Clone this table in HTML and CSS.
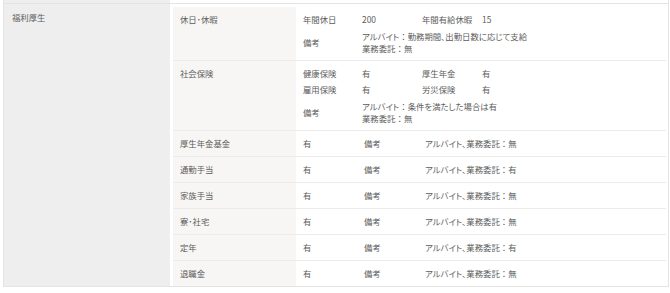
FILE: index.html
```html
<!DOCTYPE html>
<html lang="ja">
<head>
<meta charset="utf-8">
<link rel="stylesheet" href="styles.css">
</head>
<body>
<div class="table">
  <div class="row prev">
    <div class="th"></div>
    <div class="td"></div>
  </div>
  <div class="row">
    <div class="th">福利厚生</div>
    <div class="td">
      <div class="sub">
        <div class="sub-row">
          <div class="sub-label">休日･休暇</div>
          <div class="sub-val stack">
            <div class="kv4"><span>年間休日</span><span>200</span><span>年間有給休暇</span><span>15</span></div>
            <div class="note"><span>備考</span><span>アルバイト<span class="colon">：</span>勤務期間、出勤日数に応じて支給<br>業務委託<span class="colon">：</span>無</span></div>
          </div>
        </div>
        <div class="sub-row">
          <div class="sub-label">社会保険</div>
          <div class="sub-val stack">
            <div class="kv4"><span>健康保険</span><span>有</span><span>厚生年金</span><span>有</span></div>
            <div class="kv4"><span>雇用保険</span><span>有</span><span>労災保険</span><span>有</span></div>
            <div class="note"><span>備考</span><span>アルバイト<span class="colon">：</span>条件を満たした場合は有<br>業務委託<span class="colon">：</span>無</span></div>
          </div>
        </div>
        <div class="sub-row">
          <div class="sub-label">厚生年金基金</div>
          <div class="sub-val kv3"><span>有</span><span>備考</span><span>アルバイト、業務委託<span class="colon">：</span>無</span></div>
        </div>
        <div class="sub-row">
          <div class="sub-label">通勤手当</div>
          <div class="sub-val kv3"><span>有</span><span>備考</span><span>アルバイト、業務委託<span class="colon">：</span>有</span></div>
        </div>
        <div class="sub-row">
          <div class="sub-label">家族手当</div>
          <div class="sub-val kv3"><span>有</span><span>備考</span><span>アルバイト、業務委託<span class="colon">：</span>無</span></div>
        </div>
        <div class="sub-row">
          <div class="sub-label">寮･社宅</div>
          <div class="sub-val kv3"><span>有</span><span>備考</span><span>アルバイト、業務委託<span class="colon">：</span>無</span></div>
        </div>
        <div class="sub-row">
          <div class="sub-label">定年</div>
          <div class="sub-val kv3"><span>有</span><span>備考</span><span>アルバイト、業務委託<span class="colon">：</span>有</span></div>
        </div>
        <div class="sub-row">
          <div class="sub-label">退職金</div>
          <div class="sub-val kv3"><span>有</span><span>備考</span><span>アルバイト、業務委託<span class="colon">：</span>無</span></div>
        </div>
      </div>
    </div>
  </div>
</div>
</body>
</html>
```
FILE: styles.css
```css
html, body {
  margin: 0;
  padding: 0;
  background: #ffffff;
}
body {
  font-family: "Noto Sans CJK JP", "Noto Sans", sans-serif;
  font-size: 8.4px;
  line-height: 12px;
  color: #5c5c5c;
  font-feature-settings: "palt";
}
.colon {
  font-feature-settings: normal;
}
.table {
  margin-left: 3px;
  width: 664px;
  border-left: 1px solid #e4e4e4;
  border-right: 1px solid #e4e4e4;
}
.row {
  display: grid;
  grid-template-columns: 166px 1fr;
  border-bottom: 1px solid #e4e4e4;
}
.row.prev {
  height: 3px;
}
.th {
  background: #eeeeee;
  padding: 7px 8px;
}
.row.prev .th {
  padding: 0;
}
.td {
  background: #ffffff;
  padding: 3px 2px 0 3px;
}
.row.prev .td {
  padding: 0;
}
.sub {
  display: flex;
  flex-direction: column;
}
.sub-row {
  display: grid;
  grid-template-columns: 123px 1fr;
  border-bottom: 1px solid #ebebeb;
}
.sub-row:last-child {
  border-bottom: none;
}
.sub-label {
  background: #f7f6f4;
  padding: 6px 7px;
}
.sub-val {
  padding: 6.5px 7px 6.5px 7px;
}
.stack {
  display: flex;
  flex-direction: column;
  gap: 4.5px;
  padding: 6px 7px;
}
.kv4 {
  display: grid;
  grid-template-columns: 59px 60px 60px 1fr;
}
.note {
  display: grid;
  grid-template-columns: 59px 1fr;
  align-items: center;
}
.kv3 {
  display: grid;
  grid-template-columns: 61px 61px 1fr;
}
```
